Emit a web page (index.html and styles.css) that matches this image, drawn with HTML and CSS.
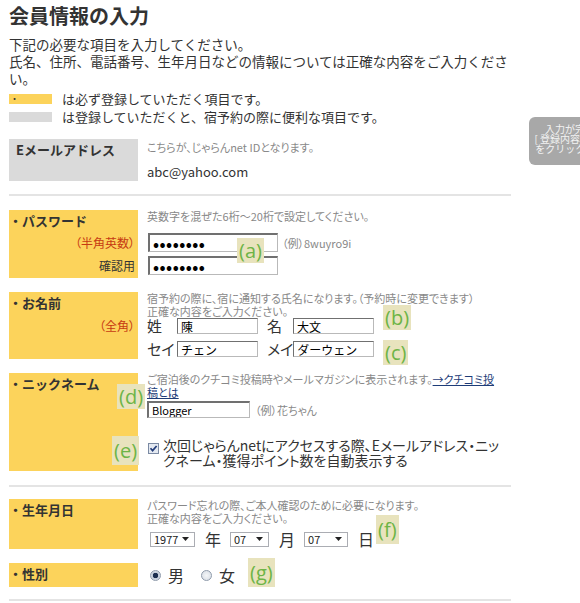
FILE: index.html
```html
<!DOCTYPE html>
<html lang="ja">
<head>
    <meta charset="UTF-8">
    <meta name="viewport" content="width=device-width, initial-scale=1.0">
    <title>会員情報の入力</title>
    <link rel="stylesheet" href="styles.css">
</head>
<body>
    <div class="page">
        <h1 class="page-title">会員情報の入力</h1>

        <div class="intro">
            <p>下記の必要な項目を入力してください。</p>
            <p>氏名、住所、電話番号、生年月日などの情報については正確な内容をご入力くださ<br>い。</p>
        </div>

        <div class="legend">
            <div class="legend-row"><span class="swatch swatch-required">・</span>は必ず登録していただく項目です。</div>
            <div class="legend-row"><span class="swatch swatch-optional"></span>は登録していただくと、宿予約の際に便利な項目です。</div>
        </div>

        <div class="section section-first">
            <div class="field">
                <div class="field-label is-optional">Eメールアドレス</div>
                <div class="field-body email-body">
                    <p class="desc">こちらが、じゃらんnet IDとなります。</p>
                    <p class="email-value">abc@yahoo.com</p>
                </div>
            </div>
        </div>

        <div class="section">
            <div class="field">
                <div class="field-label">
                    <div>・パスワード</div>
                    <div class="sub-label is-note">（半角英数）</div>
                    <div class="sub-label">確認用</div>
                </div>
                <div class="field-body">
                    <p class="desc">英数字を混ぜた6桁～20桁で設定してください。</p>
                    <div class="pw-rows">
                        <div class="pw-row">
                            <input class="text-input pw-input" type="password" value="password">
                            <span class="example">（例）8wuyro9i</span>
                        </div>
                        <div class="pw-row">
                            <input class="text-input pw-input" type="password" value="password">
                        </div>
                    </div>
                </div>
                <span class="badge badge-a">(a)</span>
            </div>

            <div class="field">
                <div class="field-label">
                    <div>・お名前</div>
                    <div class="sub-label is-note is-name">（全角）</div>
                </div>
                <div class="field-body name-body">
                    <p class="desc">宿予約の際に、宿に通知する氏名になります。（予約時に変更できます）<br>正確な内容をご入力ください。</p>
                    <div class="name-grid">
                        <div class="name-row">
                            <span class="name-key">姓</span>
                            <input class="text-input name-input" type="text" value="陳">
                            <span class="name-key is-given">名</span>
                            <input class="text-input name-input" type="text" value="大文">
                        </div>
                        <div class="name-row">
                            <span class="name-key">セイ</span>
                            <input class="text-input name-input" type="text" value="チェン">
                            <span class="name-key is-given">メイ</span>
                            <input class="text-input name-input" type="text" value="ダーウェン">
                        </div>
                    </div>
                </div>
                <span class="badge badge-b">(b)</span>
                <span class="badge badge-c">(c)</span>
            </div>

            <div class="field">
                <div class="field-label">
                    <div>・ニックネーム</div>
                </div>
                <div class="field-body nick-body">
                    <p class="desc">ご宿泊後のクチコミ投稿時やメールマガジンに表示されます。<a href="#">→クチコミ投稿とは</a></p>
                    <div class="nick-row">
                        <input class="text-input nick-input" type="text" value="Blogger">
                        <span class="example">（例）花ちゃん</span>
                    </div>
                    <label class="auto-login">
                        <svg class="check" viewBox="0 0 11 11">
                            <rect x="0.5" y="0.5" width="10" height="10" fill="#e4e9f1" stroke="#7b8aa3"/>
                            <path d="M2.5 5.3 L4.6 7.6 L8.6 3" fill="none" stroke="#233c79" stroke-width="1.7"/>
                        </svg>
                        <span>次回じゃらんnetにアクセスする際、Eメールアドレス・ニックネーム・獲得ポイント数を自動表示する</span>
                    </label>
                </div>
                <span class="badge badge-d">(d)</span>
                <span class="badge badge-e is-tall">(e)</span>
            </div>
        </div>

        <div class="section section-last">
            <div class="field">
                <div class="field-label">
                    <div>・生年月日</div>
                </div>
                <div class="field-body date-body">
                    <p class="desc">パスワード忘れの際、ご本人確認のために必要になります。<br>正確な内容をご入力ください。</p>
                    <div class="date-row">
                        <span class="select select-year">
                            <select><option>1977</option></select>
                            <svg class="caret" viewBox="0 0 7 4"><path d="M0 0h7L3.5 4z" fill="#222"/></svg>
                        </span>
                        <span class="date-unit">年</span>
                        <span class="select select-month">
                            <select><option>07</option></select>
                            <svg class="caret" viewBox="0 0 7 4"><path d="M0 0h7L3.5 4z" fill="#222"/></svg>
                        </span>
                        <span class="date-unit">月</span>
                        <span class="select select-day">
                            <select><option>07</option></select>
                            <svg class="caret" viewBox="0 0 7 4"><path d="M0 0h7L3.5 4z" fill="#222"/></svg>
                        </span>
                        <span class="date-unit">日</span>
                    </div>
                </div>
                <span class="badge badge-f is-tall">(f)</span>
            </div>

            <div class="field">
                <div class="field-label">
                    <div>・性別</div>
                </div>
                <div class="field-body gender-row">
                    <input class="radio" type="radio" name="sex" checked>
                    <span class="gender-label">男</span>
                    <input class="radio" type="radio" name="sex">
                    <span class="gender-label">女</span>
                </div>
                <span class="badge badge-g is-tall">(g)</span>
            </div>
        </div>
    </div>

    <div class="guide">
        入力が完了したら<br>
        [ 登録内容を確認する ]<br>
        をクリックして下さい
    </div>
</body>
</html>
```

FILE: styles.css
```css
* {
    margin: 0;
    padding: 0;
    box-sizing: border-box;
}

body {
    font-family: "Noto Sans CJK JP", "Noto Sans", sans-serif;
    color: #333;
    background: #fff;
    overflow-x: hidden;
}

.page {
    width: 520px;
    padding: 4px 0 0 9px;
}

.page-title {
    font-size: 20px;
    line-height: 24px;
    font-weight: 700;
}

.intro {
    width: 502px;
    margin-top: 8px;
    font-size: 13.5px;
    line-height: 17px;
}

/* legend */
.legend {
    margin-top: 3px;
    font-size: 13px;
    line-height: 18px;
}

.legend-row {
    display: flex;
    align-items: center;
}

.swatch {
    flex: 0 0 43px;
    height: 10px;
    margin-right: 10px;
    padding-left: 1px;
    font-size: 9px;
    line-height: 10px;
}

.swatch-required {
    background: #fcd35b;
}

.swatch-optional {
    background: #dadada;
}

/* form sections */
.section {
    width: 502px;
    display: flex;
    flex-direction: column;
    gap: 14px;
    padding: 14px 0;
    border-bottom: 2px solid #e4e4e4;
}

.section-first {
    margin-top: 13px;
    padding: 0 0 13px;
}

.section-last {
    padding: 12px 0;
}

.field {
    position: relative;
    display: flex;
}

.field-label {
    flex: 0 0 129px;
    padding: 3px 3px 3px 0;
    background: #fcd35b;
    font-size: 13px;
    font-weight: 700;
    line-height: 16px;
}

.field-label.is-optional {
    padding-left: 7px;
    background: #dadada;
}

.sub-label {
    margin-top: 4px;
    font-size: 12px;
    font-weight: 400;
    line-height: 19px;
    text-align: right;
    font-feature-settings: "palt";
}

.sub-label.is-note {
    color: #c63a12;
}

.sub-label.is-name {
    margin-top: 7px;
    line-height: 15px;
}

.field-body {
    width: 358px;
    margin-left: 9px;
}

.desc {
    font-size: 11px;
    line-height: 13px;
    color: #888;
    font-feature-settings: "palt";
}

.desc a {
    color: #1d3c78;
}

.example {
    font-size: 11px;
    color: #888;
    font-feature-settings: "palt";
}

.text-input {
    flex-shrink: 0;
    padding: 0 3px;
    border: 1px solid #b9b9b9;
    border-top: 2px solid #707070;
    border-left: 2px solid #707070;
    background: #fff;
    color: #000;
    font: 12px/1 "Noto Sans CJK JP", sans-serif;
    outline: none;
}

/* email */
.email-body {
    padding-top: 2px;
}

.email-value {
    margin-top: 9px;
    font-size: 13px;
    line-height: 18px;
}

/* password */
.pw-rows {
    display: flex;
    flex-direction: column;
    gap: 4px;
    margin-top: 10px;
}

.pw-row {
    display: flex;
    align-items: center;
    gap: 4px;
}

.pw-input {
    width: 130px;
    height: 19px;
    margin-left: 1px;
    font-size: 16px;
    font-weight: 700;
    letter-spacing: 0.5px;
}

/* name */
.name-body {
    padding-bottom: 2px;
}

.name-grid {
    display: flex;
    flex-direction: column;
    gap: 7px;
}

.name-row {
    display: flex;
    align-items: center;
    height: 16px;
}

.name-key {
    flex: 0 0 30px;
    font-size: 15px;
    line-height: 16px;
    white-space: nowrap;
    font-feature-settings: "palt";
}

.name-key.is-given {
    flex-basis: 26px;
    margin-left: 9px;
}

.name-input {
    width: 81px;
    height: 16px;
    border-width: 1px;
}

/* nickname */
.nick-row {
    display: flex;
    align-items: center;
    gap: 5px;
    margin-top: 2px;
}

.nick-input {
    width: 103px;
    height: 17px;
    font-size: 11px;
}

.auto-login {
    display: flex;
    align-items: flex-start;
    margin-top: 20px;
    padding-bottom: 3px;
    font-size: 14px;
    line-height: 15px;
    font-feature-settings: "palt";
}

.check {
    flex: 0 0 11px;
    height: 11px;
    margin: 5px 4px 0 1px;
}

/* birthday */
.date-body {
    padding-bottom: 2px;
}

.date-row {
    display: flex;
    align-items: center;
    height: 16px;
    margin-top: 6px;
    padding-left: 3px;
}

.select {
    display: inline-flex;
    align-items: center;
    height: 15px;
    border: 1px solid #abadb3;
    background: #fff;
}

.select select {
    flex: 1;
    min-width: 0;
    height: 13px;
    padding-left: 3px;
    border: 0;
    background: transparent;
    color: #222;
    font: 11px/13px "Noto Sans CJK JP", sans-serif;
    appearance: none;
    outline: none;
}

.select-year {
    width: 45px;
}

.select-month {
    width: 39px;
}

.select-day {
    width: 44px;
}

.caret {
    width: 7px;
    height: 4px;
    margin-right: 5px;
}

.date-unit {
    margin: 0 9px 0 10px;
    font-size: 16px;
    line-height: 16px;
}

/* gender */
.gender-row {
    display: flex;
    align-items: center;
    padding-left: 3px;
    font-size: 16px;
}

.radio {
    width: 11px;
    height: 11px;
    margin-right: 7px;
    border: 1px solid #8f9bab;
    border-radius: 50%;
    background: radial-gradient(circle, #f4f6f8, #d5dbe3);
    appearance: none;
}

.radio:checked {
    background: radial-gradient(circle, #1d2f4f 0 2.5px, #c3ccd8 3px, #eef1f5 100%);
}

.gender-label + .radio {
    margin-left: 17px;
}

/* annotation badges */
.badge {
    position: absolute;
    padding: 0 2px;
    background: #e8e3bd;
    color: #6db446;
    font: 20px/25px "Open Sans", sans-serif;
}

.badge.is-tall {
    line-height: 29px;
}

.badge-a { left: 228px; top: 28px; }
.badge-b { left: 374px; top: 13px; }
.badge-c { left: 374px; top: 48px; }
.badge-d { left: 108px; top: 11px; }
.badge-e { left: 103px; top: 63px; }
.badge-f { left: 367px; top: 16px; }
.badge-g { left: 239px; top: -5px; }

/* floating guide at the right edge */
.guide {
    position: absolute;
    top: 117px;
    left: 529px;
    width: 112px;
    height: 48px;
    padding-top: 7px;
    border-radius: 6px;
    background: #a8a8a8;
    color: #f2f2f2;
    font-size: 10px;
    line-height: 10px;
    text-align: center;
}
```
